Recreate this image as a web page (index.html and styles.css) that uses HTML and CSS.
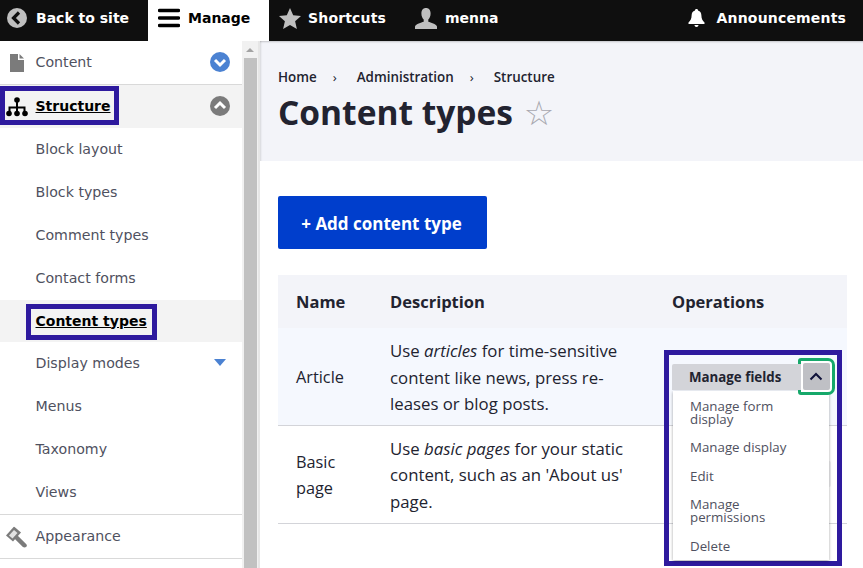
FILE: index.html
```html
<!DOCTYPE html>
<html lang="en">
<head>
<meta charset="utf-8">
<title>Content types</title>
<link rel="stylesheet" href="styles.css">
</head>
<body>
<header class="toolbar">
  <a class="tool tool-back"><svg class="ico" viewBox="0 0 20 20" width="20" height="20"><circle cx="10" cy="10" r="10" fill="#bfbfbf"/><path d="M12 4.500 6.500 10l5.500 5.500" fill="none" stroke="#0f0f0f" stroke-width="3.200"/></svg><span>Back to site</span></a>
  <a class="tool tool-manage"><svg class="ico" viewBox="0 0 22 20" width="22" height="20"><path d="M1.500 2.500h19M1.500 10h19M1.500 17.500h19" stroke="#000" stroke-width="3.400" stroke-linecap="round"/></svg><span>Manage</span></a>
  <a class="tool tool-short"><svg class="ico" viewBox="0 0 22 21" width="22" height="21"><path d="M11 0l3.200 7.300 7.800.7-5.900 5.200 1.800 7.800L11 16.900 4.100 21l1.800-7.800L0 8l7.800-.7z" fill="#bfbfbf"/></svg><span class="wide">Shortcuts</span></a>
  <a class="tool tool-user"><svg class="ico" viewBox="0 0 22 21" width="22" height="21"><path d="M11 0c3 0 4.600 2.200 4.600 5.500 0 2.600-1 5-2.300 6v2.300c2.500 1 7.700 1.900 8.700 4.700v2.500H0v-2.500c1-2.800 6.200-3.700 8.700-4.700v-2.300c-1.300-1-2.300-3.400-2.300-6C6.400 2.200 8 0 11 0z" fill="#bfbfbf"/></svg><span>menna</span></a>
  <a class="tool tool-bell"><svg class="ico" viewBox="0 0 17 18" width="17" height="18"><path d="M8.500 0c1 0 1.500.6 1.500 1.400 2.400.7 3.300 2.600 3.400 5 .1 3.300 1 5 3.100 7.100v1.500H.5v-1.500c2.100-2.100 3-3.800 3.100-7.100.1-2.400 1-4.300 3.400-5C7 .6 7.500 0 8.500 0zM6.500 16h4c0 1.200-.9 2-2 2s-2-.8-2-2z" fill="#fff"/></svg><span class="wide">Announcements</span></a>
</header>

<div class="shell">
  <nav class="sidebar">
    <ul class="menu">
      <li class="item top">
        <svg class="mi" viewBox="0 0 14 18" width="14" height="18"><path d="M0 0h8v6h6v12H0zM9.500 0 14 4.500H9.500z" fill="#7b7b7b"/></svg>
        <a class="lbl">Content</a>
        <svg class="chev" viewBox="0 0 20 20" width="20" height="20"><circle cx="10" cy="10" r="10" fill="#4b82d2"/><path d="M5 8l5 5 5-5" fill="none" stroke="#fff" stroke-width="3"/></svg>
      </li>
      <li class="item top open">
        <svg class="mi" viewBox="0 0 22 20" width="22" height="20"><path d="M11 3v6M3.500 16v-5.500h15V16M11 9v7" fill="none" stroke="#000" stroke-width="2"/><circle cx="11" cy="3" r="2.800" fill="#000"/><circle cx="3" cy="16.500" r="2.800" fill="#000"/><circle cx="11" cy="16.500" r="2.800" fill="#000"/><circle cx="19" cy="16.500" r="2.800" fill="#000"/></svg>
        <a class="lbl strong">Structure</a>
        <svg class="chev" viewBox="0 0 20 20" width="20" height="20"><circle cx="10" cy="10" r="10" fill="#7b7b7b"/><path d="M5 12l5-5 5 5" fill="none" stroke="#fff" stroke-width="3"/></svg>
      </li>
      <li class="sub">Block layout</li>
      <li class="sub">Block types</li>
      <li class="sub">Comment types</li>
      <li class="sub">Contact forms</li>
      <li class="sub active"><a class="strong">Content types</a></li>
      <li class="sub">Display modes<span class="tri"></span></li>
      <li class="sub">Menus</li>
      <li class="sub">Taxonomy</li>
      <li class="sub last">Views</li>
      <li class="item top">
        <svg class="mi" viewBox="0 0 21 21" width="21" height="21"><path d="M0 9 8 0l7 6-8 9z" fill="#7b7b7b"/><path d="M3 9l5-5.500 3.500 3L6.500 12z" fill="#e2e2e2"/><path d="M11 11.500l7.500 7.500" stroke="#7b7b7b" stroke-width="4.500" stroke-linecap="round"/></svg>
        <a class="lbl">Appearance</a>
      </li>
    </ul>
    <div class="scrollbar"><span class="arrow"></span><span class="thumb"></span></div>
  </nav>

  <main class="main">
    <section class="head">
      <ol class="crumbs">
        <li>Home</li><li class="sep">›</li><li>Administration</li><li class="sep">›</li><li>Structure</li>
      </ol>
      <h1>Content types <span class="star">☆</span></h1>
    </section>
    <section class="body">
      <a class="add">+ Add content type</a>
      <table class="types">
        <thead>
          <tr><th class="c1">Name</th><th class="c2">Description</th><th class="c3">Operations</th></tr>
        </thead>
        <tbody>
          <tr class="hl">
            <td class="name">Article</td>
            <td class="desc">Use <em>articles</em> for time-sensitive content like news, press re­leases or blog posts.</td>
            <td></td>
          </tr>
          <tr>
            <td class="name">Basic page</td>
            <td class="desc">Use <em>basic pages</em> for your static content, such as an 'About us' page.</td>
            <td class="ghost-cell"><span class="ghost"></span></td>
          </tr>
        </tbody>
      </table>
    </section>
  </main>
</div>

<span class="mark mark-structure"></span>
<span class="mark mark-types"></span>

<div class="drop">
  <div class="drop-top">
    <a class="drop-main">Manage fields</a>
    <span class="drop-toggle"><svg viewBox="0 0 14 9" width="14" height="9"><path d="M1.500 7.500 7 2l5.500 5.500" fill="none" stroke="#10123a" stroke-width="2"/></svg></span>
  </div>
  <ul class="drop-list">
    <li>Manage form display</li>
    <li>Manage display</li>
    <li>Edit</li>
    <li>Manage permissions</li>
    <li>Delete</li>
  </ul>
</div>
</body>
</html>
```

FILE: styles.css
```css
* { box-sizing: border-box; }
html, body { margin: 0; height: 100%; overflow: hidden; }
body { background: #fff; font-family: "Open Sans", "Noto Sans", sans-serif; color: #222330; position: relative; }
ul, ol { list-style: none; margin: 0; padding: 0; }

.toolbar { height: 41px; background: #0f0f0f; display: flex; align-items: center; font: bold 14px "DejaVu Sans", sans-serif; color: #fff; }
.tool { display: flex; align-items: center; height: 41px; padding-bottom: 5px; }
.tool-back { width: 148px; padding-left: 7px; gap: 9px; }
.tool-manage { width: 121px; background: #fff; color: #000; padding-left: 10px; gap: 8px; }
.tool-short { width: 137px; padding-left: 10px; gap: 7px; }
.tool-user { padding-left: 9px; gap: 8px; }
.tool-bell { margin-left: auto; padding-right: 17px; gap: 12px; }
.wide { letter-spacing: .17px; }
.ico { flex: none; }

.shell { display: grid; grid-template-columns: 260px 1fr; height: 527px; }
.sidebar { display: grid; grid-template-columns: 242px 16px; overflow: hidden; position: relative; font: 14.200px "DejaVu Sans", sans-serif; color: #4f5160; border-right: 2px solid #e6e6e6; }
.item { height: 44px; display: flex; align-items: center; border-bottom: 1px solid #d9d9d9; position: relative; padding: 0 0 2px 35.500px; }
.item.open { background: #f3f3f3; border-bottom: 0; height: 43px; }
.mi { position: absolute; left: 6px; top: 50%; transform: translateY(-50%); }
.item:first-child .mi { left: 10px; }
.chev { margin-left: auto; margin-right: 12px; }
.sub { height: 42.900px; display: flex; align-items: center; padding: 0 0 1px 35.500px; position: relative; }
.sub.active { background: #f3f3f3; }
.sub.last { border-bottom: 1px solid #d9d9d9; height: 44px; padding-bottom: 2px; }
.strong { font-size: 14px; font-weight: bold; color: #000; text-decoration: underline; }
.tri { position: absolute; left: 214px; top: 17px; border: 6px solid transparent; border-top: 7px solid #4b82d2; border-bottom: 0; }
.scrollbar { background: #f1f1f1; display: flex; flex-direction: column; align-items: flex-start; padding-left: 2px; }
.arrow { margin: 7px 0 0 2px; border: 4.500px solid transparent; border-bottom: 4.500px solid #a3a3a3; border-top: 0; height: 4px; }
.thumb { margin-top: 6px; width: 13px; flex: 1; background: #c1c1c1; }

.main { min-width: 0; }
.head { background: #f3f4f9; height: 120px; padding: 27px 18px 0; box-shadow: inset 0 3px 2px -2px rgba(0,0,0,.2), inset 3px 0 2px -2px rgba(0,0,0,.12); }
.crumbs { display: flex; gap: 16px; font-size: 13.400px; font-weight: 600; line-height: 18px; color: #222330; }
.sep { font-weight: 400; width: 8px; }
h1 { margin: 4px 0 0; font-size: 33.500px; line-height: 44px; font-weight: 700; color: #222330; }
.star { font-weight: 400; color: #a8a8b0; font-family: "DejaVu Sans", sans-serif; font-size: 34px; line-height: 0; margin-left: 2px; }
.body { padding: 35px 16px 0 18px; }
.add { display: inline-block; height: 53px; width: 209px; padding-right: 2px; background: #003ecc; color: #fff; border-radius: 2px; font-size: 17px; font-weight: 700; line-height: 55px; text-align: center; }
.types { width: 569px; margin-top: 26px; border-collapse: collapse; font-size: 16.300px; line-height: 26.500px; table-layout: fixed; }
.types th { height: 53px; background: #f3f4f9; text-align: left; font-size: 16.500px; font-weight: 700; padding: 2px 18px 0; }
.c1 { width: 94px; }
.c2 { width: 282px; }
.types td { padding: 10px 18px 8px; border-bottom: 1px solid #d3d4d9; vertical-align: middle; }
.types .desc { font-size: 16.800px; padding-right: 24px; }
.types tr.hl td { background: #f5f8fe; padding-bottom: 7px; }
.types tr.hl .name { padding-top: 8px; }
.types .ghost-cell { padding: 0; }
.ghost { display: block; height: 26px; background: #f0f0f3; margin: 0 16px 0 20px; border-radius: 2px; }

.mark { position: absolute; border: 5px solid #2e1a9e; }
.mark-structure { left: 0; top: 86px; width: 119px; height: 39px; }
.mark-types { left: 26px; top: 304px; width: 131px; height: 36px; }

.drop { position: absolute; left: 664px; top: 350px; width: 178px; height: 216px; border: 5px solid #2e1a9e; padding: 9px 7px 0 3px; font-size: 13.300px; color: #4f5160; }
.drop-top { display: flex; height: 27px; }
.drop-main { flex: none; width: 129px; height: 26px; background: #d3d4d9; border-radius: 2px 0 0 0; padding-left: 17px; font-weight: 700; color: #222330; line-height: 27px; position: relative; z-index: 1; }
.drop-toggle { position: relative; flex: none; width: 37px; height: 37px; margin: -6px -5px 0 -3px; border: 3px solid #16a86a; border-radius: 3px 7px 7px 3px; background: #fff; display: block; }
.drop-toggle svg { position: absolute; left: 8px; top: 11px; z-index: 1; }
.drop-toggle::before { content: ""; position: absolute; left: 2px; top: 2px; right: 2px; bottom: 2px; background: #bfc0c5; border-radius: 2px; }
.drop-list { background: #fff; margin: 0 1px; height: 169px; box-shadow: 0 1px 3px rgba(0,0,0,.35); padding: 0 16px 0 17px; line-height: 13px; }
.drop-list li { padding: 8px 0; }
.drop-list li:nth-child(1) { padding: 9px 0 7px; }
.drop-list li:nth-child(3) { padding-bottom: 7px; }
```
